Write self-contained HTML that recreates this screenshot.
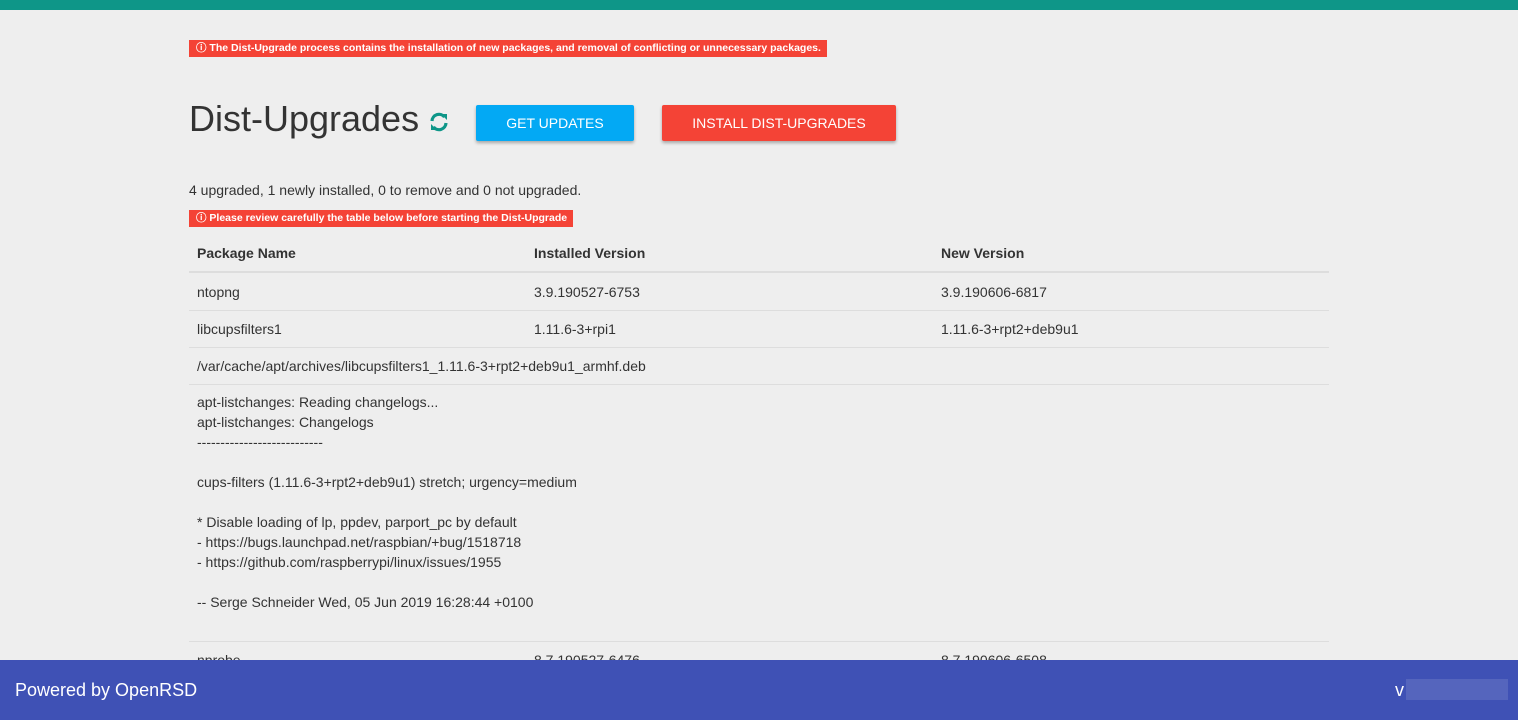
<!DOCTYPE html>
<html><head><style>
body{margin:0;width:1518px;height:720px;overflow:hidden;background:#eeeeee;font-family:"Liberation Sans",sans-serif;color:#333;position:relative}
.top{height:10px;background:#0e9688}
.badge{position:absolute;background:#f44336;color:#fff;font-weight:bold;font-size:10.5px;height:17px;line-height:17px;padding:0 6px 0 7px;white-space:nowrap}
.btn{position:absolute;height:36px;line-height:36px;color:#fff;font-size:14px;text-align:center;box-shadow:0 2px 3px rgba(0,0,0,.3);border-radius:2px}
table{position:absolute;left:189px;top:235px;width:1140px;border-collapse:collapse;font-size:14px}
td,th{text-align:left;padding:0 8px;height:36px;border-top:1px solid #ddd;vertical-align:middle}
th{border-top:none;border-bottom:2px solid #ddd;height:36px}
.foot{position:absolute;left:0;top:660px;width:1518px;height:60px;background:#3f51b5;color:#fff;font-size:18px}
</style></head><body>
<div class="top"></div>
<div class="badge" style="left:189px;top:40px">&#x24D8; The Dist-Upgrade process contains the installation of new packages, and removal of conflicting or unnecessary packages.</div>
<div style="position:absolute;left:189px;top:98px;font-size:36px;color:#333">Dist-Upgrades</div>
<svg style="position:absolute;left:428px;top:111px" width="22" height="22" viewBox="0 0 22 22"><path d="M4 10a7 7 0 0 1 12.5-4M18 12a7 7 0 0 1-12.5 4" stroke="#0e9688" stroke-width="3.2" fill="none"/><path d="M13 3h6v6z M9 19H3v-6z" fill="#0e9688"/></svg>
<div class="btn" style="left:476px;top:105px;width:158px;background:#03a9f4">GET UPDATES</div>
<div class="btn" style="left:662px;top:105px;width:234px;background:#f44336">INSTALL DIST-UPGRADES</div>
<div style="position:absolute;left:189px;top:182px;font-size:14px">4 upgraded, 1 newly installed, 0 to remove and 0 not upgraded.</div>
<div class="badge" style="left:189px;top:210px">&#x24D8; Please review carefully the table below before starting the Dist-Upgrade</div>
<table>
<tr><th style="width:321px">Package Name</th><th style="width:391px">Installed Version</th><th>New Version</th></tr>
<tr><td style="height:37px">ntopng</td><td>3.9.190527-6753</td><td>3.9.190606-6817</td></tr>
<tr><td>libcupsfilters1</td><td>1.11.6-3+rpi1</td><td>1.11.6-3+rpt2+deb9u1</td></tr>
<tr><td colspan="3">/var/cache/apt/archives/libcupsfilters1_1.11.6-3+rpt2+deb9u1_armhf.deb</td></tr>
<tr><td colspan="3" style="height:249px;line-height:20px;vertical-align:top;padding-top:7px">apt-listchanges: Reading changelogs...<br>apt-listchanges: Changelogs<br>---------------------------<br><br>cups-filters (1.11.6-3+rpt2+deb9u1) stretch; urgency=medium<br><br>* Disable loading of lp, ppdev, parport_pc by default<br>- https://bugs.launchpad.net/raspbian/+bug/1518718<br>- https://github.com/raspberrypi/linux/issues/1955<br><br>-- Serge Schneider Wed, 05 Jun 2019 16:28:44 +0100</td></tr>
<tr><td>nprobe</td><td>8.7.190527-6476</td><td>8.7.190606-6508</td></tr>
</table>
<div class="foot"><span style="position:absolute;left:15px;top:20px">Powered by OpenRSD</span><span style="position:absolute;left:1395px;top:20px">v</span><div style="position:absolute;left:1406px;top:19px;width:102px;height:21px;background:#5565bd"></div></div>
</body></html>
